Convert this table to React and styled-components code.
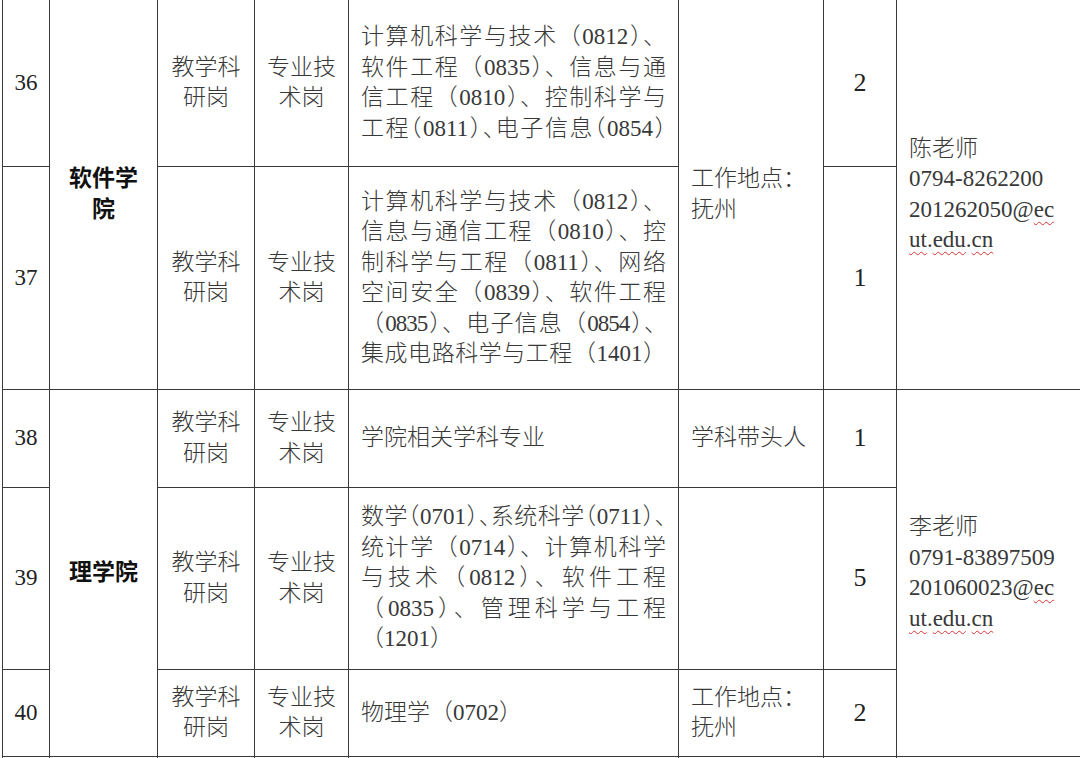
import React from 'react'
import styled, { createGlobalStyle, css } from 'styled-components'

const Global = createGlobalStyle`
  html, body {
    margin: 0;
    padding: 0;
    background: #fff;
    height: 758px;
    overflow: hidden;
  }
`

const Sheet = styled.div`
  display: grid;
  grid-template-columns: 46px 107px 96px 93px 329px 144px 72px 1fr;
  grid-template-rows: 166px 222px 97px 181px 86px 1px;
  gap: 1px;
  margin-left: 2px;
  padding-left: 1px;
  background: #3a3a3a;
  font-family: "Liberation Serif", "Noto Sans CJK SC", serif;
  font-size: 23px;
  font-weight: 300;
  line-height: 30.5px;
  color: #383838;
`

const Cell = styled.div`
  background: #fff;
  display: flex;
  flex-direction: column;
  justify-content: center;
  align-items: center;
  padding: 0 11px;
  min-width: 0;
  overflow: hidden;
  grid-row: ${(p) => (p.$span ? `span ${p.$span}` : 'auto')};
`

const NumCell = styled(Cell)`
  padding: 0;
  color: #222;
`

const CollegeCell = styled(Cell)`
  font-weight: 700;
  color: #111;
  text-align: center;
`

const LeftCell = styled(Cell)`
  align-items: flex-start;
  padding: 0 11px 0 12px;
`

const MajorCell = styled(Cell)`
  align-items: stretch;
  padding: 0 12px;
`

const CountCell = styled(Cell)`
  padding: 0;
  font-size: 26px;
  color: #222;
`

const Line = styled.div`
  white-space: nowrap;
  ${(p) =>
    p.$fill &&
    css`
      text-align: justify;
      text-align-last: justify;
    `}
  ${(p) =>
    p.$tight &&
    css`
      font-feature-settings: "halt";
    `}
  ${(p) =>
    p.$squeeze &&
    css`
      letter-spacing: -1px;
    `}
`

const Spell = styled.span`
  text-decoration: underline wavy #d33;
  text-decoration-thickness: 1px;
  text-underline-offset: 4px;
`

const Stack = ({ lines }) => lines.map((l, i) => <Line key={i}>{l}</Line>)

const PostCells = () => (
  <>
    <Cell>
      <Stack lines={['教学科', '研岗']} />
    </Cell>
    <Cell>
      <Stack lines={['专业技', '术岗']} />
    </Cell>
  </>
)

const Place = ({ span }) => (
  <LeftCell $span={span}>
    <Line>工作地点：</Line>
    <Line>抚州</Line>
  </LeftCell>
)

const Contact = ({ span, name, phone, mail }) => (
  <LeftCell $span={span}>
    <Line>{name}</Line>
    <Line>{phone}</Line>
    <Line>
      {mail}@<Spell>ec</Spell>
    </Line>
    <Line>
      <Spell>ut</Spell>.<Spell>edu</Spell>.<Spell>cn</Spell>
    </Line>
  </LeftCell>
)

export default function App() {
  return (
    <>
      <Global />
      <Sheet>
        {/* 36 */}
        <NumCell>36</NumCell>
        <CollegeCell $span={2}>
          <Line>软件学</Line>
          <Line>院</Line>
        </CollegeCell>
        <PostCells />
        <MajorCell>
          <Line $fill>计算机科学与技术（0812）、</Line>
          <Line $fill>软件工程（0835）、信息与通</Line>
          <Line $fill>信工程（0810）、控制科学与</Line>
          <Line $fill $tight>工程（0811）、电子信息（0854）</Line>
        </MajorCell>
        <Place span={2} />
        <CountCell>2</CountCell>
        <Contact span={2} name="陈老师" phone="0794-8262200" mail="201262050" />

        {/* 37 */}
        <NumCell>37</NumCell>
        <PostCells />
        <MajorCell>
          <Line $fill>计算机科学与技术（0812）、</Line>
          <Line $fill>信息与通信工程（0810）、控</Line>
          <Line $fill>制科学与工程（0811）、网络</Line>
          <Line $fill>空间安全（0839）、软件工程</Line>
          <Line $fill $squeeze>（0835）、电子信息（0854）、</Line>
          <Line $fill>集成电路科学与工程（1401）</Line>
        </MajorCell>
        <CountCell>1</CountCell>

        {/* 38 */}
        <NumCell>38</NumCell>
        <CollegeCell $span={3}>
          <Line>理学院</Line>
        </CollegeCell>
        <PostCells />
        <MajorCell>
          <Line>学院相关学科专业</Line>
        </MajorCell>
        <LeftCell>
          <Line>学科带头人</Line>
        </LeftCell>
        <CountCell>1</CountCell>
        <Contact span={3} name="李老师" phone="0791-83897509" mail="201060023" />

        {/* 39 */}
        <NumCell>39</NumCell>
        <PostCells />
        <MajorCell>
          <Line $fill $tight>数学（0701）、系统科学（0711）、</Line>
          <Line $fill>统计学（0714）、计算机科学</Line>
          <Line $fill>与技术（0812）、软件工程</Line>
          <Line $fill>（0835）、管理科学与工程</Line>
          <Line>（1201）</Line>
        </MajorCell>
        <LeftCell />
        <CountCell>5</CountCell>

        {/* 40 */}
        <NumCell>40</NumCell>
        <PostCells />
        <MajorCell>
          <Line>物理学（0702）</Line>
        </MajorCell>
        <Place />
        <CountCell>2</CountCell>

        {Array.from({ length: 8 }, (_, i) => (
          <Cell key={i} />
        ))}
      </Sheet>
    </>
  )
}
